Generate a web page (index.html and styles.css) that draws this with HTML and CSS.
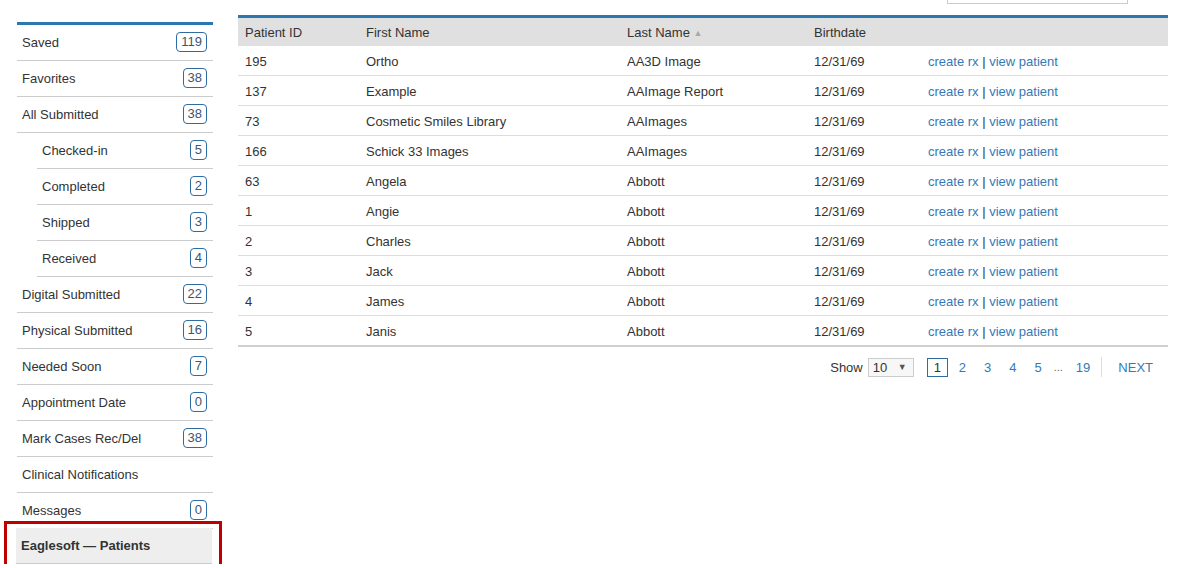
FILE: index.html
```html
<!DOCTYPE html>
<html>
<head>
<meta charset="utf-8">
<link rel="stylesheet" href="styles.css">
</head>
<body>
<div class="page">
  <nav class="sidebar">
    <ul class="menu">
      <li class="item"><span>Saved</span><span class="badge">119</span></li>
      <li class="item"><span>Favorites</span><span class="badge">38</span></li>
      <li class="item"><span>All Submitted</span><span class="badge">38</span></li>
      <li class="item sub"><span>Checked-in</span><span class="badge">5</span></li>
      <li class="item sub"><span>Completed</span><span class="badge">2</span></li>
      <li class="item sub"><span>Shipped</span><span class="badge">3</span></li>
      <li class="item sub"><span>Received</span><span class="badge">4</span></li>
      <li class="item"><span>Digital Submitted</span><span class="badge">22</span></li>
      <li class="item"><span>Physical Submitted</span><span class="badge">16</span></li>
      <li class="item"><span>Needed Soon</span><span class="badge">7</span></li>
      <li class="item"><span>Appointment Date</span><span class="badge">0</span></li>
      <li class="item"><span>Mark Cases Rec/Del</span><span class="badge">38</span></li>
      <li class="item"><span>Clinical Notifications</span></li>
      <li class="item"><span>Messages</span><span class="badge">0</span></li>
      <li class="item active"><span>Eaglesoft — Patients</span><span class="highlight"></span></li>
    </ul>
  </nav>
  <main class="main">
    <div class="toolbar"><div class="search"></div></div>
    <table class="grid">
      <thead>
        <tr><th class="c1">Patient ID</th><th class="c2">First Name</th><th class="c3">Last Name <span class="sort">▲</span></th><th class="c4">Birthdate</th><th class="c5"></th></tr>
      </thead>
      <tbody>
        <tr><td>195</td><td>Ortho</td><td>AA3D Image</td><td>12/31/69</td><td><a>create rx</a> | <a>view patient</a></td></tr>
        <tr><td>137</td><td>Example</td><td>AAImage Report</td><td>12/31/69</td><td><a>create rx</a> | <a>view patient</a></td></tr>
        <tr><td>73</td><td>Cosmetic Smiles Library</td><td>AAImages</td><td>12/31/69</td><td><a>create rx</a> | <a>view patient</a></td></tr>
        <tr><td>166</td><td>Schick 33 Images</td><td>AAImages</td><td>12/31/69</td><td><a>create rx</a> | <a>view patient</a></td></tr>
        <tr><td>63</td><td>Angela</td><td>Abbott</td><td>12/31/69</td><td><a>create rx</a> | <a>view patient</a></td></tr>
        <tr><td>1</td><td>Angie</td><td>Abbott</td><td>12/31/69</td><td><a>create rx</a> | <a>view patient</a></td></tr>
        <tr><td>2</td><td>Charles</td><td>Abbott</td><td>12/31/69</td><td><a>create rx</a> | <a>view patient</a></td></tr>
        <tr><td>3</td><td>Jack</td><td>Abbott</td><td>12/31/69</td><td><a>create rx</a> | <a>view patient</a></td></tr>
        <tr><td>4</td><td>James</td><td>Abbott</td><td>12/31/69</td><td><a>create rx</a> | <a>view patient</a></td></tr>
        <tr><td>5</td><td>Janis</td><td>Abbott</td><td>12/31/69</td><td><a>create rx</a> | <a>view patient</a></td></tr>
      </tbody>
    </table>
    <div class="pager">
      <span class="show">Show</span>
      <span class="select"><span>10</span><span class="arrow">▼</span></span>
      <span class="pages">
        <span class="page-num current">1</span>
        <a class="page-num">2</a>
        <a class="page-num">3</a>
        <a class="page-num">4</a>
        <a class="page-num">5</a>
        <span class="dots">...</span>
        <a class="page-num last">19</a>
      </span>
      <span class="sep"></span>
      <a class="next">NEXT</a>
    </div>
  </main>
</div>
</body>
</html>
```
FILE: styles.css
```css
html, body {
  margin: 0;
  padding: 0;
  background: #fff;
}
body {
  font-family: "Liberation Sans", Arial, sans-serif;
  font-size: 13px;
  color: #333;
  overflow: hidden;
}
.page {
  display: flex;
  align-items: flex-start;
  padding-left: 17px;
  gap: 25px;
}
.sidebar {
  width: 196px;
  margin-top: 22px;
  border-top: 3px solid #2b78b0;
}
.menu {
  list-style: none;
  margin: 0;
  padding: 0;
}
.item {
  display: flex;
  align-items: center;
  justify-content: space-between;
  height: 34px;
  padding: 0 6px 1px 5px;
  border-bottom: 1px solid #ccc;
}
.item.sub {
  margin-left: 20px;
}
.badge {
  font-size: 13px;
  line-height: 18px;
  padding: 0 4px;
  border: 1px solid #2e6da4;
  border-radius: 4px;
  color: #3b5670;
}
.item.active {
  position: relative;
  margin-top: -1px;
  margin-left: -1px;
  margin-right: 1px;
  background: #eee;
  font-weight: bold;
  padding-left: 5px;
  height: 34px;
}
.highlight {
  position: absolute;
  left: -12px;
  top: -7px;
  width: 212px;
  height: 48px;
  border: 3px solid #c00000;
}
.main {
  width: 930px;
}
.toolbar {
  display: flex;
  justify-content: flex-end;
  height: 4px;
  padding-right: 40px;
}
.search {
  width: 179px;
  height: 3px;
  border: 1px solid #ccc;
  border-top: none;
}
.grid {
  margin-top: 11px;
  width: 930px;
  border-collapse: collapse;
  border-top: 3px solid #2b78b0;
  border-bottom: 2px solid #d0d0d0;
  table-layout: fixed;
}
.grid th {
  background: #e0e0e0;
  font-weight: normal;
  text-align: left;
  height: 28px;
  padding: 0 7px;
}
.c1 { width: 107px; }
.c2 { width: 247px; }
.c3 { width: 173px; }
.c4 { width: 100px; }
.sort {
  font-size: 9px;
  color: #aaa;
  vertical-align: 1px;
}
.grid td {
  height: 27px;
  padding: 2px 7px 0 7px;
  border-bottom: 1px solid #ddd;
  white-space: nowrap;
}
.grid tbody tr:last-child td {
  border-bottom: none;
}
.grid a {
  color: #337ab7;
}
.pager {
  display: flex;
  align-items: center;
  justify-content: flex-end;
  margin-top: 10px;
  padding-right: 15px;
  height: 20px;
  font-size: 13px;
}
.show {
  margin-right: 5px;
}
.select {
  display: flex;
  align-items: center;
  justify-content: space-between;
  box-sizing: border-box;
  width: 46px;
  height: 19px;
  border: 1px solid #ccc;
  background: #f7f7f7;
  padding: 0 6px 0 4px;
  font-size: 13px;
}
.arrow {
  font-size: 9px;
  color: #555;
}
.pages {
  display: flex;
  align-items: center;
  margin-left: 13px;
}
.page-num {
  color: #337ab7;
  margin-right: 18px;
  line-height: 19px;
}
.page-num.current {
  box-sizing: border-box;
  width: 21px;
  height: 19px;
  text-align: center;
  border: 1px solid #2e6da4;
  color: #333;
  line-height: 17px;
  margin-right: 11px;
}
.page-num.last {
  margin-right: 0;
}
.dots {
  color: #666;
  font-size: 11px;
  margin: 0 13px 0 -6px;
}
.sep {
  width: 1px;
  height: 20px;
  background: #ddd;
  margin: 0 16px 0 11px;
}
.next {
  color: #337ab7;
}
```
